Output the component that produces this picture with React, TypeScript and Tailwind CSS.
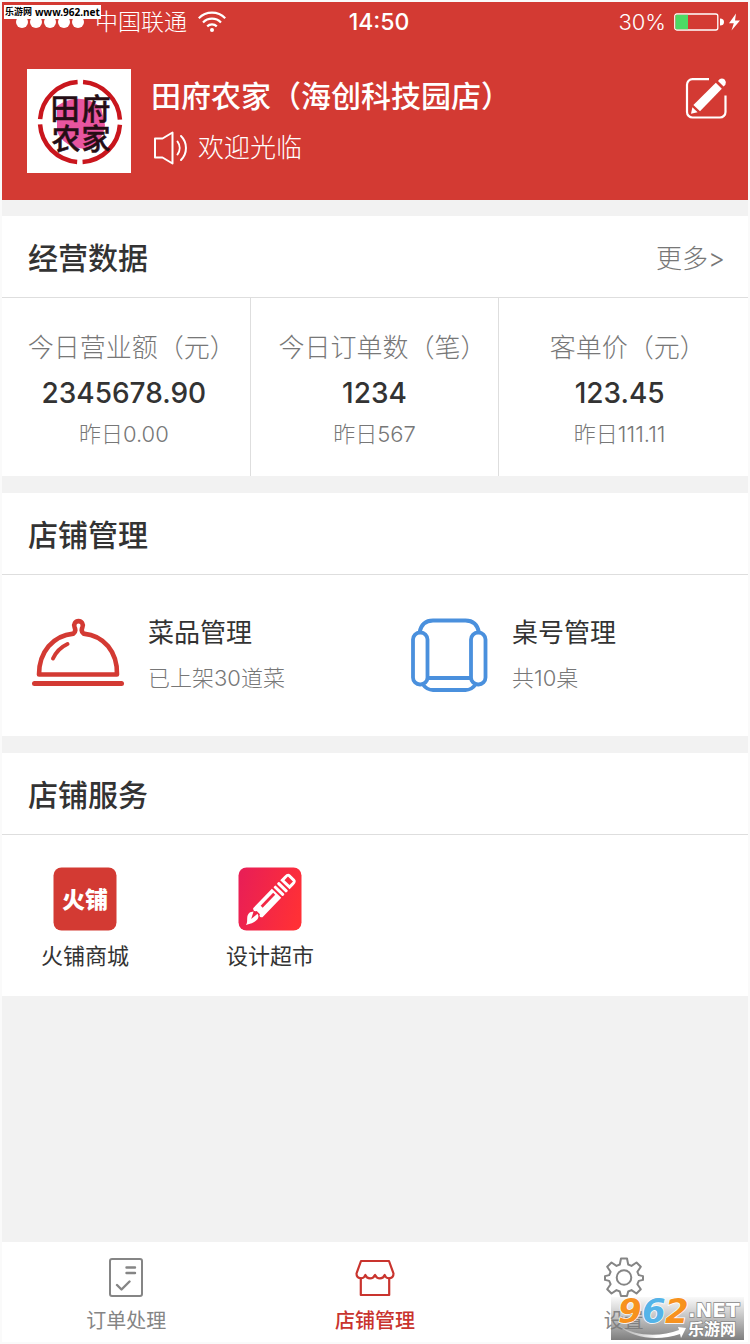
import type { ReactNode } from 'react';

interface Stat {
  label: string;
  value: string;
  previous: string;
}

const stats: Stat[] = [
  { label: '今日营业额（元）', value: '2345678.90', previous: '昨日0.00' },
  { label: '今日订单数（笔）', value: '1234', previous: '昨日567' },
  { label: '客单价（元）', value: '123.45', previous: '昨日111.11' },
];

const ShopLogo = () => (
  <svg viewBox="0 0 104 104" className="size-[104px] shrink-0 bg-white" role="img" aria-label="田府农家">
    <path d="M30 37Q52 22 74 38L78 56Q76 74 58 80Q36 78 30 62z" fill="#e8559f" />
    <circle cx="53" cy="53" r="40" fill="none" stroke="#c9161d" strokeWidth="4.5" strokeDasharray="57.3 5.53" strokeDashoffset="-2.8" />
    <g fill="#250d14" fontSize="29" fontWeight="500" stroke="#250d14" strokeWidth="0.5" textAnchor="middle">
      <text x="38" y="51">田</text>
      <text x="69" y="51">府</text>
      <text x="39" y="81">农</text>
      <text x="69" y="81">家</text>
    </g>
  </svg>
);

const WifiIcon = () => (
  <svg viewBox="0 0 28 22" className="h-[22px] w-7" fill="none" stroke="#fff" strokeWidth="2.2">
    <path d="M0.8 7.2a18.5 18.5 0 0 1 26.4 0" />
    <path d="M5 11.4a12.6 12.6 0 0 1 18 0" />
    <path d="M9.2 15.4a6.8 6.8 0 0 1 9.6 0" />
    <circle cx="14" cy="19" r="2" fill="#fff" stroke="none" />
  </svg>
);

const BatteryIcon = () => (
  <svg viewBox="0 0 68 20" className="h-5 w-[68px]">
    <rect x="0.8" y="2" width="43" height="16" rx="2" fill="none" stroke="#fff" strokeWidth="1.3" />
    <path d="M2.5 2.7H14v14.6H2.5q-1 0-1-1V3.7q0-1 1-1z" fill="#4cd964" />
    <path d="M46 6.5q4 0 4 3.5t-4 3.5z" fill="#fff" />
    <path d="M62 1.5 55 11.3h4.8L57.5 18.5 66 8.5h-5z" fill="#fff" />
  </svg>
);

const EditIcon = () => (
  <svg viewBox="0 0 42 42" className="size-[42px]">
    <path d="M24 2.2H7.5a5.5 5.5 0 0 0-5.5 5.5V35a5.5 5.5 0 0 0 5.5 5.5H35a5.5 5.5 0 0 0 5.5-5.5V18.5" fill="none" stroke="#fff" strokeWidth="2.2" />
    <path d="M30.8 5.8l6 6L15 34.3l-6.6-6.2z" fill="#fff" />
    <path d="M33 4l1.800-2q2.800-1.200 5 .8 2.100 2.400.6 5L38.600 9.600z" fill="#fff" />
    <path d="M7.4 30.3l5.2 4.9-6.6 1.6z" fill="#fff" />
  </svg>
);

const SpeakerIcon = () => (
  <svg viewBox="-1 0 38 36" className="h-9 w-[38px]" fill="none" stroke="#fff" strokeWidth="2" strokeLinejoin="round" strokeLinecap="round">
    <path d="M2 8.5h7.5L19.5 2.5v31l-10-6H2z" />
    <path d="M24.5 11.5a11 11 0 0 1 0 13" />
    <path d="M28 6a17 17 0 0 1 0 24" />
  </svg>
);

const DishIcon = () => (
  <svg viewBox="0 4 96 76" className="h-[76px] w-24" fill="none" stroke="#d33a33" strokeLinecap="round" strokeLinejoin="round">
    <path d="M9 61.5C9 39 23 22.5 43.5 20.6C46 19 45.5 16 44.6 14.2A4.3 4.3 0 1 1 52.4 14.2C51.500 16 51 19 53.500 20.6C74 22.5 87.5 39 87 61.5z" strokeWidth="4.6" />
    <path d="M23 45.5C26 39 31 34 37.5 31" strokeWidth="4" />
    <path d="M4.5 70.5h87" strokeWidth="5" />
  </svg>
);

const ChairIcon = () => (
  <svg viewBox="0 2 96 76" className="h-[76px] w-24" fill="none" stroke="#4a90dd" strokeWidth="3.8">
    <rect x="19" y="17.500" width="14.500" height="52" rx="7" />
    <rect x="77" y="17.500" width="14.500" height="52" rx="7" />
    <path d="M25.500 17.500C27 9.500 32 5.500 39 5.500H71.500C78.500 5.500 83.500 9.500 85 17.500" />
    <path d="M33 63H77.500" />
    <path d="M28.500 69C31 72.500 35 75 39 75H71.500C75.500 75 79.500 72.500 82 69" />
  </svg>
);

const MallIcon = () => (
  <svg viewBox="0 0 64 64" className="size-16">
    <rect x="0.5" y="0.5" width="63" height="63" rx="8" fill="#d33a33" />
    <text x="32" y="41" fill="#fff" fontSize="23" fontWeight="900" textAnchor="middle">火铺</text>
  </svg>
);

const DesignIcon = () => (
  <svg viewBox="0 0 64 64" className="size-16">
    <defs>
      <linearGradient id="design-bg" x1="0" y1="0.3" x2="1" y2="0.6">
        <stop offset="0" stopColor="#e91f55" />
        <stop offset="1" stopColor="#ff3036" />
      </linearGradient>
    </defs>
    <rect x="0.5" y="0.5" width="63" height="63" rx="8" fill="url(#design-bg)" />
    <g transform="translate(8 58) rotate(-46)" fill="#fff">
      <path d="M0 0C5-1 6-7 12-6L15-4 8-0.5 16 0.5C15 6 8 5.5 0 0z" />
      <path d="M17-6.500H44V6.500H17C15.500 5.500 15 3 17.500 2.500V-2C15-3 15.500-5 17-6.500z" />
      <path d="M24-2.800H42V0H24z" fill="#f22846" />
      <rect x="46" y="-6.500" width="3" height="13" rx="1" />
      <rect x="51" y="-6.500" width="3" height="13" rx="1" />
      <path d="M56-6.500H62Q67-6.500 67-3V3Q67 6.500 62 6.500H56zM59-3.500V3.500H64V-3.500z" fillRule="evenodd" />
    </g>
  </svg>
);

const OrderIcon = () => (
  <svg viewBox="0 0 40 40" className="size-10" fill="none" stroke="#858585" strokeWidth="2" strokeLinecap="round" strokeLinejoin="round">
    <rect x="4" y="2" width="32" height="37" rx="2" />
    <path d="M20.5 10.5h8.5M20.5 16h8.5M11 28l4.5 4.5 8-8" strokeWidth="2.4" />
  </svg>
);

const StoreIcon = () => (
  <svg viewBox="0 0 40 40" className="size-10" fill="none" stroke="#c9342e" strokeWidth="2.2" strokeLinejoin="round">
    <path d="M6 4h28l4.5 12.5c0 5.5-7 6.5-8.8 1.5-1.7 4.5-7.7 4.5-9.7 0-2 4.5-8 4.5-9.7 0C8.5 23 1.5 22 1.5 16.5z" />
    <path d="M5.8 20.5V38h28.4V20.5" />
  </svg>
);

const GearIcon = () => (
  <svg viewBox="0 0 40 40" className="size-10" fill="none" stroke="#858585" strokeWidth="2" strokeLinejoin="round">
    <path d="M17 1.500h6l1.200 6 3.300 1.400 5-3.400 4.300 4.300-3.400 5 1.400 3.300 4.200 1v3.800l-4.200 1-1.400 3.300 3.400 5-4.300 4.300-5-3.400-3.300 1.400-1.200 4.500h-6l-1.200-4.500-3.300-1.400-5 3.400-4.300-4.300 3.400-5-1.400-3.300-4.200-1v-3.800l4.200-1 1.400-3.300-3.400-5 4.300-4.300 5 3.400 3.300-1.400z" />
    <circle cx="20" cy="20.5" r="7.3" />
  </svg>
);

const Section = ({ title, action, children }: { title: string; action?: ReactNode; children: ReactNode }) => (
  <section className="bg-white">
    <div className="flex h-[82px] items-center justify-between border-b border-[#dedede] pt-1 pr-[23px] pl-[26px]">
      <h2 className="text-[30px] font-medium text-[#333]">{title}</h2>
      {action}
    </div>
    {children}
  </section>
);

const ManageLink = ({ icon, title, note }: { icon: ReactNode; title: string; note: string }) => (
  <a href="#" className="flex items-center gap-[22px]">
    {icon}
    <span className="flex flex-col">
      <span className="text-[26px] leading-[46px] text-[#333]">{title}</span>
      <span className="text-[22px] leading-[44px] font-light text-[#777]">{note}</span>
    </span>
  </a>
);

const ServiceLink = ({ icon, title }: { icon: ReactNode; title: string }) => (
  <a href="#" className="flex flex-col items-center gap-2">
    {icon}
    <span className="text-[22px] leading-[34px] text-[#333]">{title}</span>
  </a>
);

const TabLink = ({ icon, title, active }: { icon: ReactNode; title: string; active?: boolean }) => (
  <a
    href="#"
    aria-current={active ? 'page' : undefined}
    className={`flex flex-col items-center gap-[9px] pt-[15px] pb-[6px] ${active ? 'font-medium text-[#c9342e]' : 'text-[#858585]'}`}
  >
    {icon}
    <span className="text-[20px] leading-[30px]">{title}</span>
  </a>
);

export default function App() {
  return (
    <div className="relative flex min-h-screen flex-col border-2 border-[#fafafa] bg-[#f2f2f2] font-['Inter','Noto_Sans_CJK_SC',sans-serif]">
      <header className="bg-[#d33a33] text-white">
        {/* Status bar */}
        <div className="grid h-10 grid-cols-[1fr_auto_1fr] items-center pr-[6px] pl-[14px]">
          <div className="flex items-center gap-[11px]">
            <svg viewBox="0 0 68 12" className="h-3 w-[68px]" fill="#fff">
              <circle cx="6" cy="6" r="6" />
              <circle cx="20" cy="6" r="6" />
              <circle cx="34" cy="6" r="6" />
              <circle cx="48" cy="6" r="6" />
              <circle cx="62" cy="6" r="6" />
            </svg>
            <span className="text-[23px] font-light">中国联通</span>
            <WifiIcon />
          </div>
          <span className="text-[23px] font-medium">14:50</span>
          <div className="flex items-center justify-end gap-2">
            <span className="text-[22px] font-light">30%</span>
            <BatteryIcon />
          </div>
        </div>
        <div className="flex items-start px-[25px] py-[27px]">
          <ShopLogo />
          <div className="ml-5 grow">
            <h1 className="text-[30px] leading-[54px] font-medium">田府农家（海创科技园店）</h1>
            <div className="flex items-center gap-2 pl-px text-[26px] leading-[50px] font-light">
              <SpeakerIcon />
              <span>欢迎光临</span>
            </div>
          </div>
          <button type="button" aria-label="编辑" className="mt-2 -mr-1">
            <EditIcon />
          </button>
        </div>
      </header>

      <main className="flex grow flex-col gap-[17px] pt-4">
        <Section title="经营数据" action={<a href="#" className="text-[26px] font-light text-[#777]">更多&gt;</a>}>
          <div className="grid grid-cols-3 divide-x divide-[#dedede]">
            {stats.map((stat) => (
              <div key={stat.label} className="flex flex-col items-center pt-[30px] pb-[26px] first:pr-1 last:pr-2">
                {/* the closing full-width bracket leaves blank space on its right */}
                <span className="pl-4 text-[26px] leading-10 font-light whitespace-nowrap text-[#777]">{stat.label}</span>
                <span className="text-[28px] leading-[50px] font-medium text-[#333]">{stat.value}</span>
                <span className="text-[22px] leading-8 font-light text-[#777]">{stat.previous}</span>
              </div>
            ))}
          </div>
        </Section>

        <Section title="店铺管理">
          <div className="grid grid-cols-[364fr_354fr] pt-[35px] pb-9 pl-7">
            <ManageLink icon={<DishIcon />} title="菜品管理" note="已上架30道菜" />
            <ManageLink icon={<ChairIcon />} title="桌号管理" note="共10桌" />
          </div>
        </Section>

        <Section title="店铺服务">
          <div className="flex gap-[97px] pt-8 pb-[23px] pl-[39px]">
            <ServiceLink icon={<MallIcon />} title="火铺商城" />
            <ServiceLink icon={<DesignIcon />} title="设计超市" />
          </div>
        </Section>
      </main>

      <nav className="grid grid-cols-3 bg-white">
        <TabLink icon={<OrderIcon />} title="订单处理" />
        <TabLink icon={<StoreIcon />} title="店铺管理" active />
        <TabLink icon={<GearIcon />} title="设置" />
      </nav>

      {/* Site stamps */}
      <div className="absolute top-[3px] left-[2px] flex h-[14px] items-center gap-[3px] bg-white px-px font-bold whitespace-nowrap text-black">
        <span className="text-[9px]">乐游网</span>
        <span className="font-['Noto_Sans',sans-serif] text-[10px]">www.962.net</span>
      </div>
      <svg viewBox="0 0 133 43" className="absolute right-1 bottom-[2px] h-[43px] w-[133px] overflow-visible">
        <defs>
          <linearGradient id="stamp-bg" x1="0" y1="0" x2="0" y2="1">
            <stop offset="0" stopColor="#888" stopOpacity="0.05" />
            <stop offset="1" stopColor="#777" stopOpacity="0.95" />
          </linearGradient>
          <linearGradient id="stamp-swoosh" x1="0" y1="0" x2="1" y2="0">
            <stop offset="0" stopColor="#fff" stopOpacity="0.2" />
            <stop offset="0.6" stopColor="#fff" />
          </linearGradient>
        </defs>
        <rect width="133" height="43" fill="url(#stamp-bg)" />
        <path d="M7 28C24 40 50 40 68 33L67 30 75 31 70 41 69 37C48 44 22 42 7 28z" fill="url(#stamp-swoosh)" />
        <g fontFamily="DejaVu Sans" fontWeight="700" fontStyle="italic" fontSize="34" stroke="#fff" strokeWidth="1.5" paintOrder="stroke">
          <text x="7" y="26" fill="#f7921e">9</text>
          <text x="31" y="26" fill="#55b4e8">6</text>
          <text x="54" y="26" fill="#f7921e">2</text>
        </g>
        <g fill="#fff" stroke="#888" strokeWidth="1.5" paintOrder="stroke" fontWeight="700">
          <text x="77" y="20" fontFamily="DejaVu Sans" fontSize="20">.NET</text>
          <text x="77" y="38" fontSize="16">乐游网</text>
        </g>
      </svg>
    </div>
  );
}
